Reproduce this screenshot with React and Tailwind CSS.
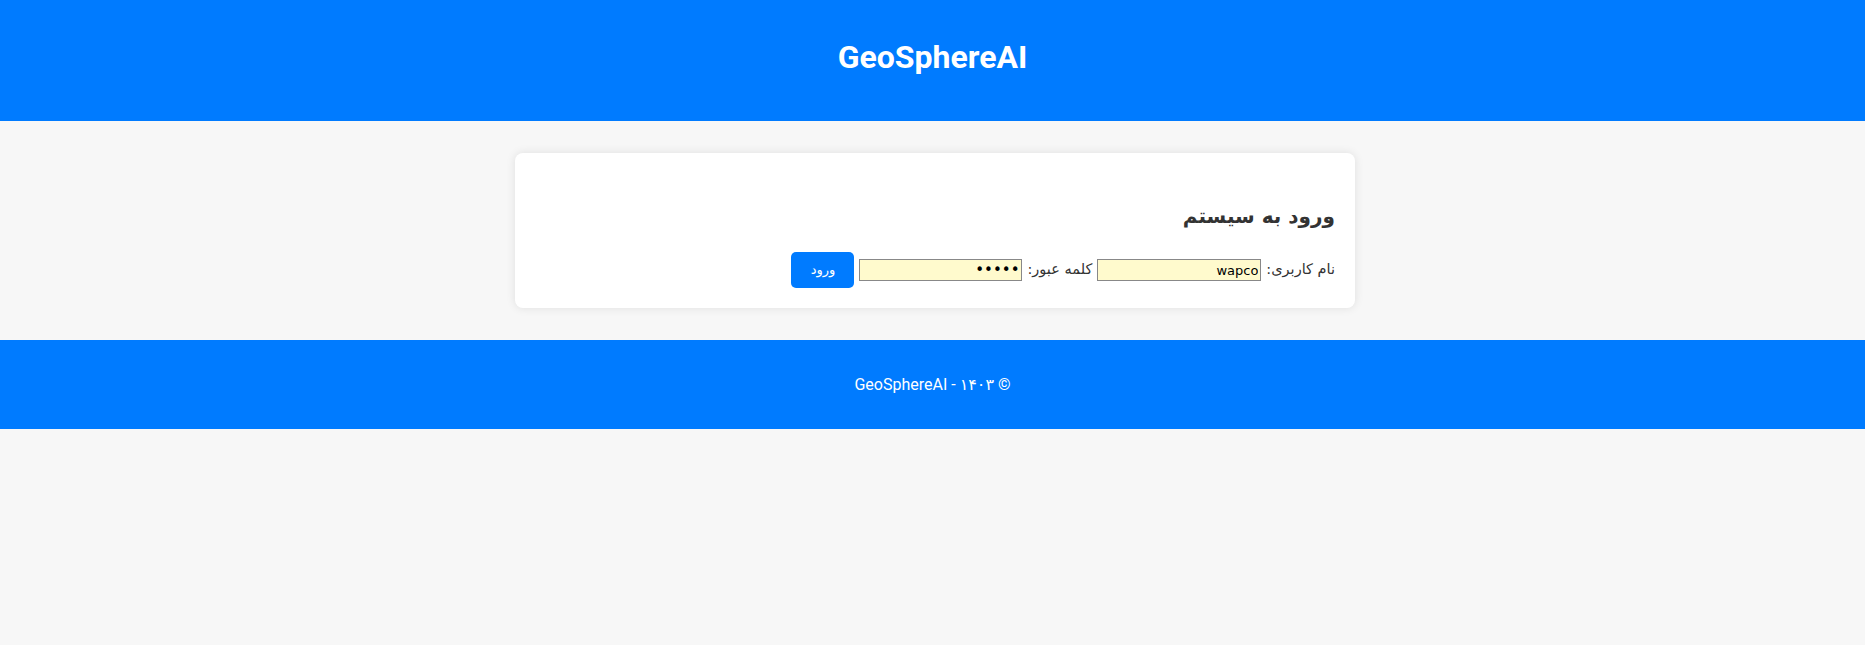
import React from 'react';

const App = () => {
  return (
    <div className="min-h-screen bg-[#f7f7f7] font-['Roboto','DejaVu_Sans',sans-serif] text-[#333]">
      <header className="h-[121px] bg-[#007bff] flex items-center justify-center pb-2">
        <h1 className="text-[32px] font-bold text-white">GeoSphereAI</h1>
      </header>

      <main className="py-8 pl-[5px] flex justify-center">
        <div dir="rtl" className="w-[840px] bg-white rounded-lg shadow-[0_0_10px_rgba(0,0,0,0.1)] p-5">
          <h2 className="text-[20px] font-bold mt-[29px] mb-[22px] leading-7 font-['DejaVu_Sans',sans-serif]">ورود به سیستم</h2>
          <form className="flex items-center gap-[5px] text-[14.5px] font-['DejaVu_Sans',sans-serif]" onSubmit={(e) => e.preventDefault()}>
            <label>نام کاربری:</label>
            <input
              type="text"
              defaultValue="wapco"
              className="w-[164px] h-[22px] bg-[#fffacd] border border-[#888] px-0.5 text-[13px] text-black outline-none"
            />
            <label>کلمه عبور:</label>
            <input
              type="password"
              defaultValue="12345"
              className="w-[163px] h-[22px] bg-[#fffacd] border border-[#888] px-0.5 text-[15px] text-black outline-none"
            />
            <button type="submit" className="w-[63px] h-9 bg-[#007bff] text-white rounded-[5px] text-[13px]">
              ورود
            </button>
          </form>
        </div>
      </main>

      <footer className="h-[89px] bg-[#007bff] flex items-center justify-center">
        <p dir="rtl" className="text-white text-base">© ۱۴۰۳ - GeoSphereAI</p>
      </footer>
    </div>
  );
};

export default App;
